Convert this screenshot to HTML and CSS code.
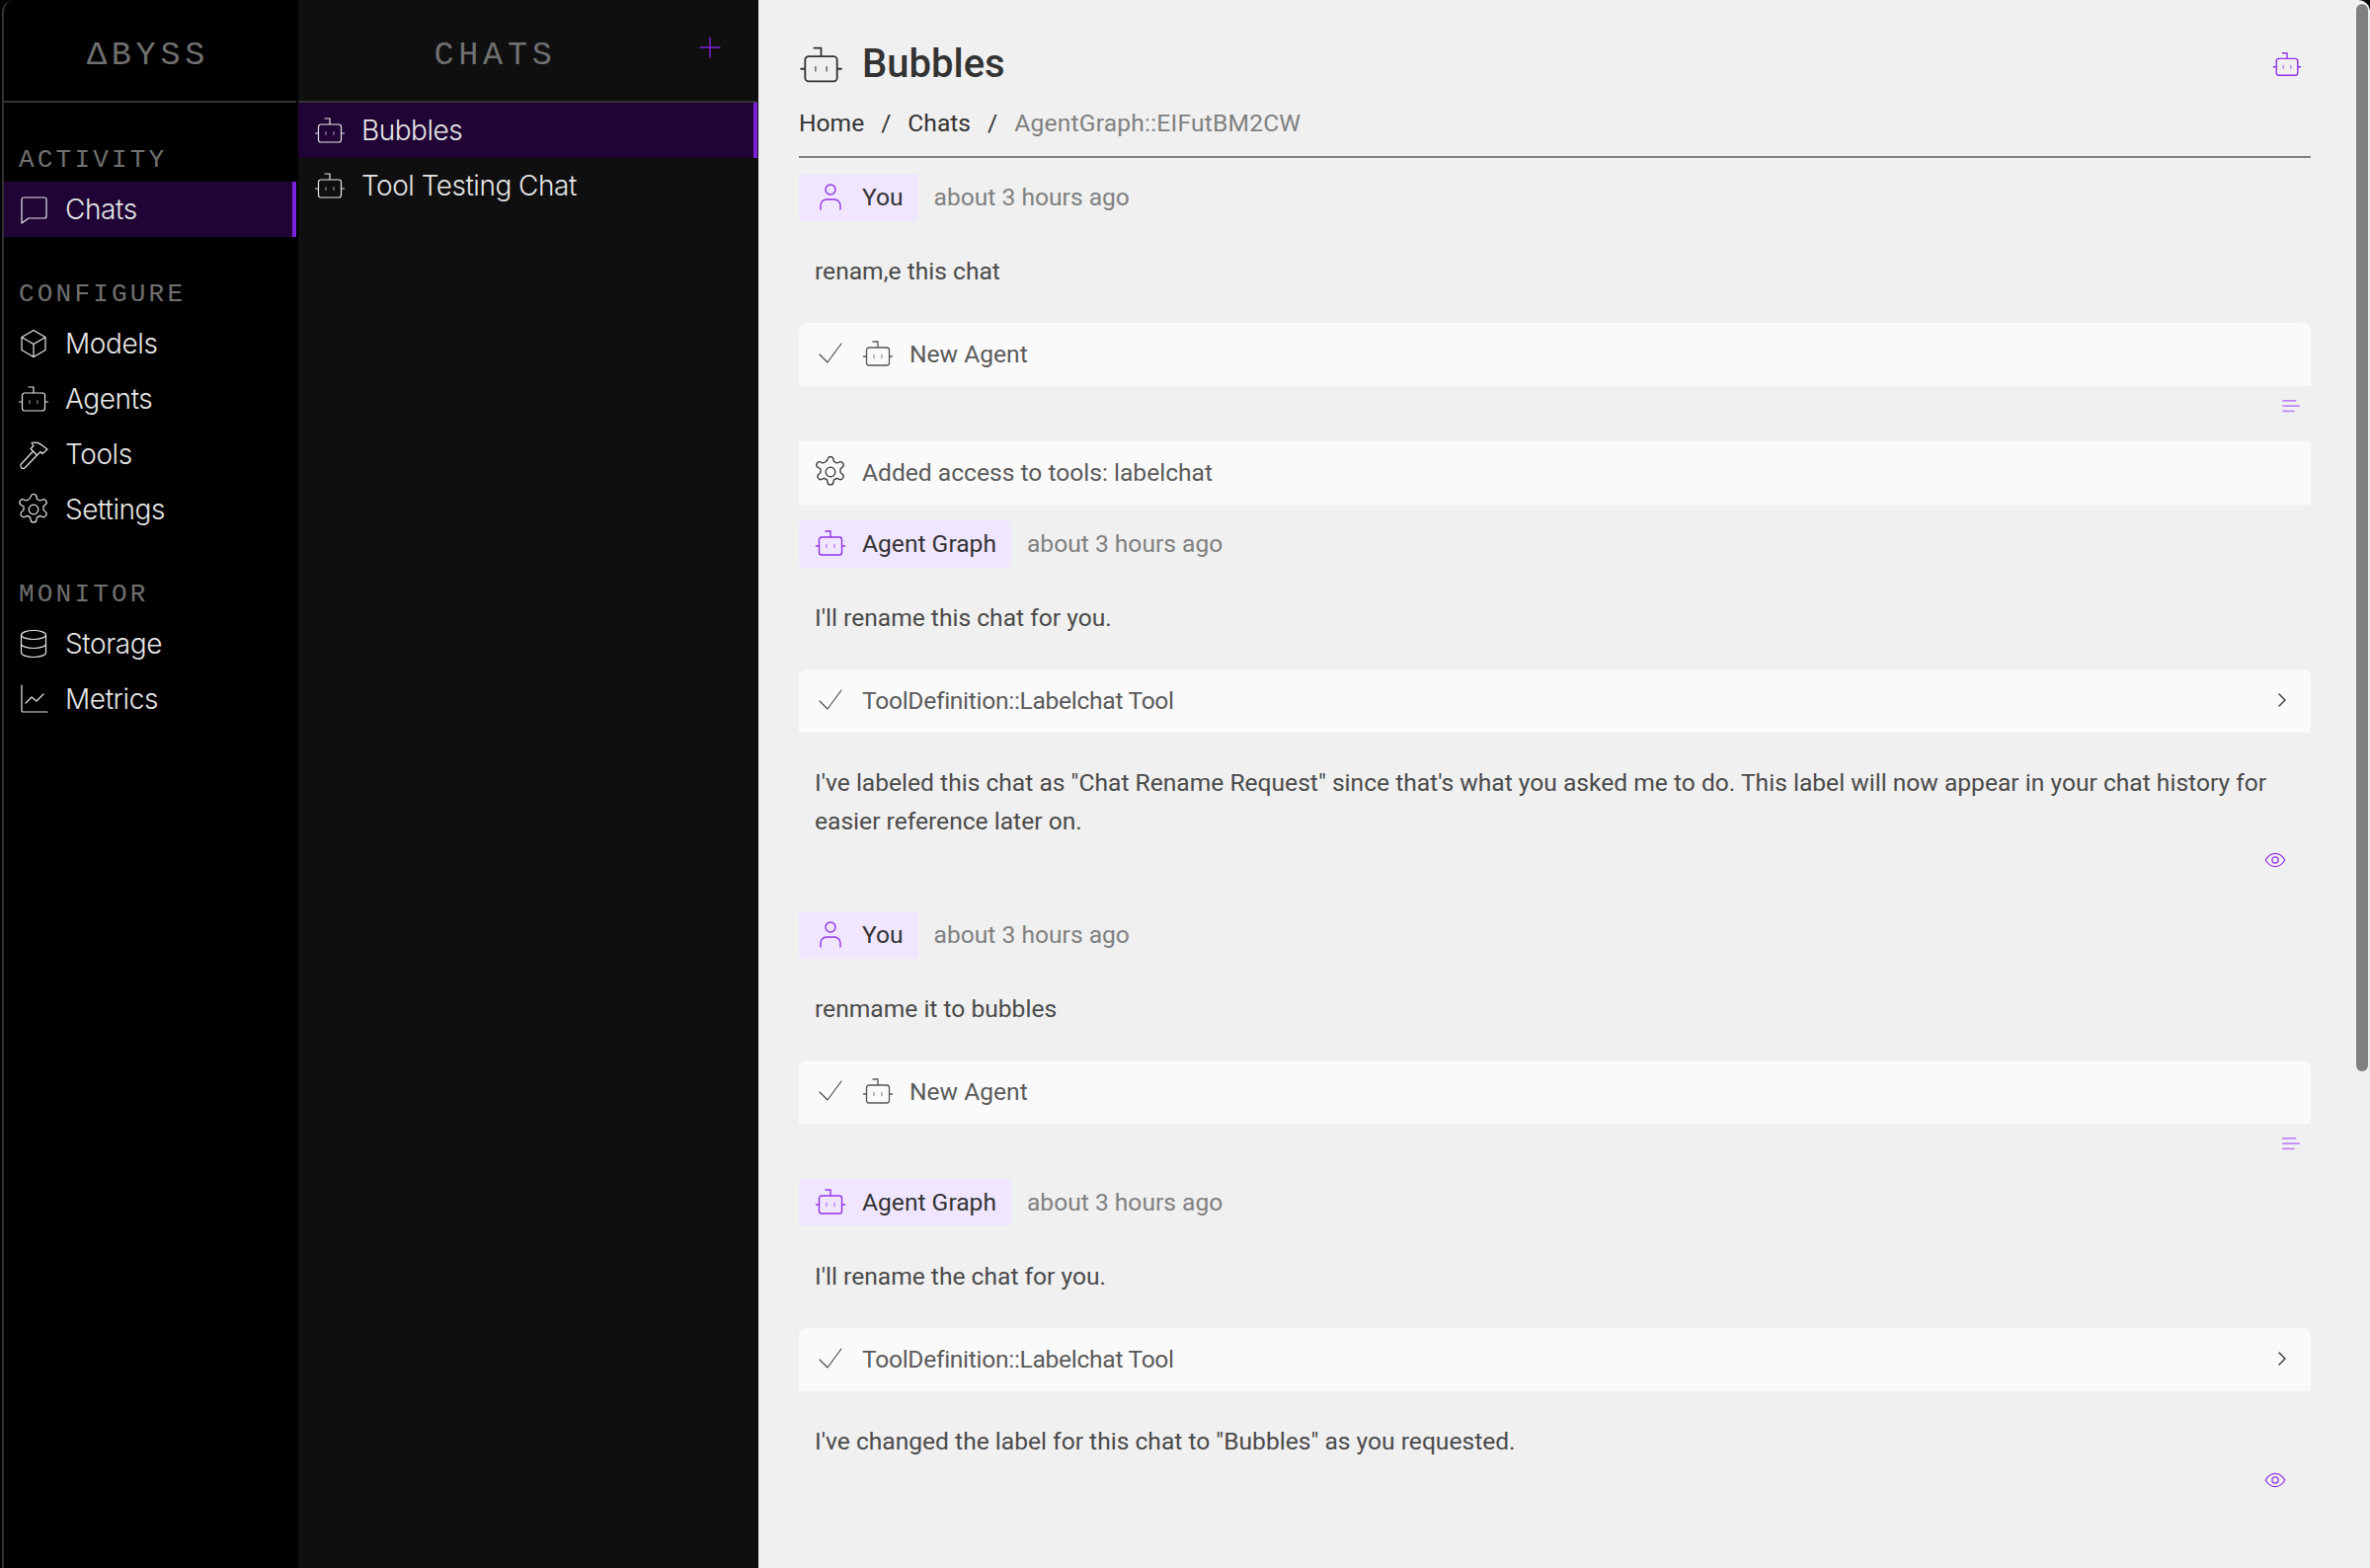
FILE: index.html
```html
<!DOCTYPE html>
<html lang="en">
<head>
<meta charset="utf-8">
<title>Abyss - Bubbles</title>
<link rel="stylesheet" href="styles.css">
</head>
<body>
<svg class="defs" width="0" height="0" aria-hidden="true">
  <defs>
    <symbol id="i-bot" viewBox="0 0 32 32"><path d="M7 10h18a2.500 2.500 0 0 1 2.500 2.500v13a2.500 2.500 0 0 1-2.500 2.500H7A2.500 2.500 0 0 1 4.500 25.500v-13A2.500 2.500 0 0 1 7 10ZM16 10V4h-5M4.500 19H1.500M27.500 19h3"/><path class="dim" d="M12 17.500v3M20 17.500v3"/></symbol>
    <symbol id="i-chat" viewBox="0 0 32 32"><path d="M6 4h21a2 2 0 0 1 2 2v17a2 2 0 0 1-2 2H11l-7 5V6a2 2 0 0 1 2-2Z"/></symbol>
    <symbol id="i-cube" viewBox="0 0 32 32"><path d="M16 2.500 28 9.500v13L16 29.500 4 22.500v-13ZM4 9.500 16 16.500 28 9.500M16 16.500v13"/></symbol>
    <symbol id="i-hammer" viewBox="0 0 32 32"><path d="M3 26.500 15.500 13l4 4L7 30a2.800 2.800 0 0 1-4-3.500ZM15.500 13l-2.500-2.500 3-3-2-3c4-1 8 0 10.500 2.500L30 11l-5 4.500-2-2-3.500 3.500"/></symbol>
    <symbol id="i-gear" viewBox="0 0 32 32"><circle cx="16" cy="16" r="4.800"/><path d="M13 3.500a3 3 0 0 1 6 0l.5 2 3 1.500 2-.8a3 3 0 0 1 3 5.300l-1.500 1.500v3.400l1.500 1.500a3 3 0 0 1-3 5.300l-2-.8-3 1.500-.5 2a3 3 0 0 1-6 0l-.5-2-3-1.500-2 .8a3 3 0 0 1-3-5.300l1.500-1.500v-3.400L3.500 11.500a3 3 0 0 1 3-5.300l2 .8 3-1.500Z"/></symbol>
    <symbol id="i-db" viewBox="0 0 32 32"><ellipse cx="16" cy="7" rx="12.500" ry="4.500"/><path d="M3.500 7v18c0 2.500 5.600 4.500 12.500 4.500s12.500-2 12.500-4.500V7M3.500 16c0 2.500 5.600 4.500 12.500 4.500s12.500-2 12.500-4.500"/></symbol>
    <symbol id="i-chart" viewBox="0 0 32 32"><path d="M4 2v26a1 1 0 0 0 1 1h25M8 20l6-6 5 4 7-7"/></symbol>
    <symbol id="i-user" viewBox="0 0 32 32"><circle cx="16" cy="9" r="5"/><path d="M6 29v-4a6 6 0 0 1 6-6h8a6 6 0 0 1 6 6v4"/></symbol>
    <symbol id="i-check" viewBox="0 0 32 32"><path d="M5 17l8 8L27 6"/></symbol>
    <symbol id="i-chevron" viewBox="0 0 16 16"><path d="M5 2l6 6-6 6"/></symbol>
    <symbol id="i-lines" viewBox="0 0 20 16"><path d="M0 2h16M0 8h20M0 14h14"/></symbol>
    <symbol id="i-eye" viewBox="0 0 24 18"><path d="M1 9c3-5 7-7.500 11-7.500S20 4 23 9c-3 5-7 7.500-11 7.500S4 14 1 9Z"/><circle cx="12" cy="9" r="3.500"/></symbol>
    <symbol id="i-plus" viewBox="0 0 22 22"><path d="M11 1v20M1 11h20"/></symbol>
  </defs>
</svg>
<div class="app">
  <nav class="nav">
    <header class="brand">ΔBYSS</header>
    <section class="nav-group first">
      <h2 class="nav-label">ACTIVITY</h2>
      <a class="nav-item active"><svg class="ic"><use href="#i-chat"/></svg><span>Chats</span></a>
    </section>
    <section class="nav-group">
      <h2 class="nav-label">CONFIGURE</h2>
      <a class="nav-item"><svg class="ic"><use href="#i-cube"/></svg><span>Models</span></a>
      <a class="nav-item"><svg class="ic"><use href="#i-bot"/></svg><span>Agents</span></a>
      <a class="nav-item"><svg class="ic"><use href="#i-hammer"/></svg><span>Tools</span></a>
      <a class="nav-item"><svg class="ic"><use href="#i-gear"/></svg><span>Settings</span></a>
    </section>
    <section class="nav-group">
      <h2 class="nav-label">MONITOR</h2>
      <a class="nav-item"><svg class="ic"><use href="#i-db"/></svg><span>Storage</span></a>
      <a class="nav-item"><svg class="ic"><use href="#i-chart"/></svg><span>Metrics</span></a>
    </section>
  </nav>
  <aside class="list">
    <header class="list-head"><span>CHATS</span><svg class="plus"><use href="#i-plus"/></svg></header>
    <a class="chat-row active"><svg class="ic"><use href="#i-bot"/></svg><span>Bubbles</span></a>
    <a class="chat-row"><svg class="ic"><use href="#i-bot"/></svg><span>Tool Testing Chat</span></a>
  </aside>
  <main class="main">
    <header class="title-row">
      <svg class="title-ic"><use href="#i-bot"/></svg>
      <h1 class="title">Bubbles</h1>
      <svg class="title-action"><use href="#i-bot"/></svg>
    </header>
    <div class="crumbs"><span>Home</span><i>/</i><span>Chats</span><i>/</i><span class="crumb-last">AgentGraph::EIFutBM2CW</span></div>

    <div class="who"><span class="pill"><svg class="pill-ic"><use href="#i-user"/></svg>You</span><time class="date">about 3 hours ago</time></div>
    <p class="text">renam,e this chat</p>
    <div class="card"><svg class="check"><use href="#i-check"/></svg><svg class="card-ic"><use href="#i-bot"/></svg><span>New Agent</span></div>
    <div class="foot"><svg class="lines"><use href="#i-lines"/></svg></div>
    <div class="card system"><svg class="gear"><use href="#i-gear"/></svg><span>Added access to tools: labelchat</span></div>

    <div class="who"><span class="pill"><svg class="pill-ic"><use href="#i-bot"/></svg>Agent Graph</span><time class="date">about 3 hours ago</time></div>
    <p class="text">I'll rename this chat for you.</p>
    <div class="card"><svg class="check"><use href="#i-check"/></svg><span class="tool">ToolDefinition::Labelchat Tool</span><svg class="chev"><use href="#i-chevron"/></svg></div>
    <p class="text tail">I've labeled this chat as "Chat Rename Request" since that's what you asked me to do. This label will now appear in your chat history for easier reference later on.</p>
    <div class="foot eye-foot"><svg class="eye"><use href="#i-eye"/></svg></div>

    <div class="who"><span class="pill"><svg class="pill-ic"><use href="#i-user"/></svg>You</span><time class="date">about 3 hours ago</time></div>
    <p class="text">renmame it to bubbles</p>
    <div class="card"><svg class="check"><use href="#i-check"/></svg><svg class="card-ic"><use href="#i-bot"/></svg><span>New Agent</span></div>
    <div class="foot"><svg class="lines"><use href="#i-lines"/></svg></div>

    <div class="who"><span class="pill"><svg class="pill-ic"><use href="#i-bot"/></svg>Agent Graph</span><time class="date">about 3 hours ago</time></div>
    <p class="text">I'll rename the chat for you.</p>
    <div class="card"><svg class="check"><use href="#i-check"/></svg><span class="tool">ToolDefinition::Labelchat Tool</span><svg class="chev"><use href="#i-chevron"/></svg></div>
    <p class="text tail">I've changed the label for this chat to "Bubbles" as you requested.</p>
    <div class="foot eye-foot"><svg class="eye"><use href="#i-eye"/></svg></div>
    <div class="scroll-thumb"></div>
  </main>
</div>
</body>
</html>
```
FILE: styles.css
```css
* { box-sizing: border-box; }
html, body { margin: 0; height: 100%; background: #000; overflow: hidden; }
.defs { position: absolute; }
svg { fill: none; stroke: currentColor; stroke-width: 1.6; stroke-linecap: round; stroke-linejoin: round; flex: none; }
.dim { opacity: .6; }

.app { display: flex; height: 1588px; font-family: "Inter", sans-serif; font-weight: 300; letter-spacing: -.4px; }

.nav { width: 300px; flex: none; background: #000; color: #e6e6e6; padding: 0 2px 0 0; border-left: 2px solid #333; margin-left: 2px; border-top-left-radius: 12px; }
.brand { height: 104px; border-bottom: 2px solid #333; display: flex; align-items: center; justify-content: center; font: 400 33.500px "Liberation Mono", monospace; letter-spacing: 4.700px; color: #707070; padding: 10px 4px 0 0; }
.nav-group { padding-top: 44px; }
.nav-label { margin: 0 0 8px; height: 28px; padding-left: 15px; display: flex; align-items: center; font: 400 26px "Liberation Mono", monospace; letter-spacing: 3.200px; color: #707070; }
.nav-item { height: 56px; display: flex; align-items: center; gap: 16px; padding-left: 14px; font-size: 28px; }
.nav-item.active { background: #1f0435; border-right: 4px solid #7c22dc; }
.ic { width: 32px; height: 32px; stroke-width: 1.200; }

.list { width: 466px; flex: none; background: #0f0f0f; color: #e6e6e6; padding-right: 1px; letter-spacing: -.5px; }
.list-head { height: 104px; position: relative; border-bottom: 2px solid #333; display: flex; align-items: center; justify-content: center; font: 400 33.500px "Liberation Mono", monospace; letter-spacing: 4.700px; color: #707070; padding: 10px 66px 0 0; }
.plus { position: absolute; right: 37px; top: 37px; width: 22px; height: 22px; color: #7c22dc; stroke-width: 1.400; }
.chat-row { height: 56px; display: flex; align-items: center; gap: 16px; padding-left: 16px; font-size: 28px; }
.chat-row.active { background: #1f0435; border-right: 4px solid #7c22dc; }

.main { flex: 1; position: relative; background: #f0f0f0; color: #333; padding: 0 60px 0 41px; font-family: "Roboto", sans-serif; font-weight: 400; font-size: 24.600px; letter-spacing: 0; overflow: hidden; border-radius: 0 12px 0 0; }
.title-row { height: 104px; padding-top: 26px; display: flex; align-items: center; gap: 19px; }
.title-ic { width: 45px; height: 45px; color: #333; stroke-width: 1.300; }
.title { margin: 0; font-size: 40px; font-weight: 500; line-height: 1; flex: 1; }
.title-action { width: 30px; height: 30px; color: #9333ea; stroke-width: 1.500; margin-right: 9px; }
.crumbs { height: 60px; margin: -4px 0 16px; padding-bottom: 9px; display: flex; align-items: center; gap: 17px; border-bottom: 2px solid #808080; }
.crumbs i { font-style: normal; }
.crumb-last { color: #808080; letter-spacing: .2px; }

.who { display: flex; align-items: center; gap: 16px; height: 48px; }
.pill { height: 48px; display: flex; align-items: center; gap: 16px; padding: 0 15px 2px 16px; background: #f0e6ff; border-radius: 4px; color: #333; }
.pill-ic { width: 32px; height: 32px; color: #9333ea; stroke-width: 1.400; }
.date { color: #808080; padding-bottom: 2px; }
.text { margin: 31px 0 33px; padding: 0 16px; line-height: 39px; color: #4a4a4a; }
.text.tail { margin-bottom: 0; }
.card { height: 64px; display: flex; align-items: center; gap: 16px; padding: 0 16px 2px; background: #fafafa; border-radius: 8px 8px 0 0; color: #5a5a5a; }
.check { width: 32px; height: 32px; color: #444; stroke-width: 1.100; }
.card-ic { width: 32px; height: 32px; color: #555; stroke-width: 1.300; }
.tool { flex: 1; letter-spacing: -.3px; }
.chev { width: 16px; height: 16px; color: #333; margin-right: 5px; stroke-width: 1.400; }
.system { margin-bottom: 16px; border-radius: 0; }
.gear { width: 32px; height: 32px; color: #333; stroke-width: 1.300; }
.foot { height: 40px; margin-bottom: 16px; display: flex; align-items: center; justify-content: flex-end; padding-right: 10px; }
.foot.eye-foot { margin-bottom: 32px; padding-right: 25px; }
.lines { width: 20px; height: 14px; color: #c084fc; stroke-width: 2; stroke-linecap: butt; }
.eye { width: 22px; height: 16px; color: #9333ea; stroke-width: 1.400; }
.scroll-thumb { position: absolute; right: 2px; top: 4px; width: 12px; height: 1081px; background: #808080; border-radius: 6px; }
```
